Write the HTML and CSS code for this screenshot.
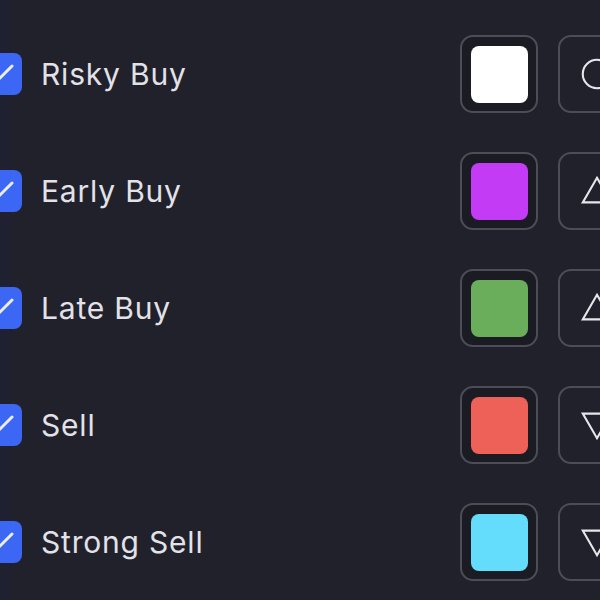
FILE: index.html
```html
<!DOCTYPE html>
<html lang="en">

<head>
    <meta charset="UTF-8">
    <meta name="viewport" content="width=device-width, initial-scale=1.0">
    <title>Signal Styles</title>
    <link rel="stylesheet" href="styles.css">
</head>

<body>
    <div class="panel">
        <ul class="series-list">
            <li class="series-row">
                <span class="checkbox">
                    <svg viewBox="0 0 42 42"><path d="M11 22 L17 28 L32 13" /></svg>
                </span>
                <span class="series-name">Risky Buy</span>
                <button class="swatch-btn"><span class="swatch" style="background-color: #ffffff;"></span></button>
                <button class="shape-btn">
                    <svg viewBox="0 0 78 78"><circle cx="39" cy="39" r="15" /></svg>
                </button>
            </li>
            <li class="series-row">
                <span class="checkbox">
                    <svg viewBox="0 0 42 42"><path d="M11 22 L17 28 L32 13" /></svg>
                </span>
                <span class="series-name">Early Buy</span>
                <button class="swatch-btn"><span class="swatch" style="background-color: #c43bf6;"></span></button>
                <button class="shape-btn">
                    <svg viewBox="0 0 78 78"><path d="M39 25 L54 51 L24 51 Z" /></svg>
                </button>
            </li>
            <li class="series-row">
                <span class="checkbox">
                    <svg viewBox="0 0 42 42"><path d="M11 22 L17 28 L32 13" /></svg>
                </span>
                <span class="series-name">Late Buy</span>
                <button class="swatch-btn"><span class="swatch" style="background-color: #6aae5c;"></span></button>
                <button class="shape-btn">
                    <svg viewBox="0 0 78 78"><path d="M39 25 L54 51 L24 51 Z" /></svg>
                </button>
            </li>
            <li class="series-row">
                <span class="checkbox">
                    <svg viewBox="0 0 42 42"><path d="M11 22 L17 28 L32 13" /></svg>
                </span>
                <span class="series-name">Sell</span>
                <button class="swatch-btn"><span class="swatch" style="background-color: #ee6159;"></span></button>
                <button class="shape-btn">
                    <svg viewBox="0 0 78 78"><path d="M24 27 L54 27 L39 53 Z" /></svg>
                </button>
            </li>
            <li class="series-row">
                <span class="checkbox">
                    <svg viewBox="0 0 42 42"><path d="M11 22 L17 28 L32 13" /></svg>
                </span>
                <span class="series-name">Strong Sell</span>
                <button class="swatch-btn"><span class="swatch" style="background-color: #64dcfb;"></span></button>
                <button class="shape-btn">
                    <svg viewBox="0 0 78 78"><path d="M24 27 L54 27 L39 53 Z" /></svg>
                </button>
            </li>
        </ul>
    </div>
</body>

</html>
```

FILE: styles.css
```css
* {
    margin: 0;
    padding: 0;
    box-sizing: border-box;
    font-family: Inter, "Noto Sans", sans-serif;
}

html,
body {
    width: 600px;
    height: 600px;
    overflow: hidden;
    background-color: #21212b;
}

.panel {
    height: 600px;
    padding-top: 35px;
    background: linear-gradient(to right, #1f2130 12px, #21212b 12px);
}

.series-list {
    list-style: none;
    width: 656px;
    margin-left: -20px;
}

.series-row {
    display: flex;
    align-items: center;
    height: 78px;
    margin-bottom: 39px;
}

.checkbox {
    display: flex;
    width: 42px;
    height: 42px;
    border-radius: 8px;
    background-color: #3c67f4;
    flex-shrink: 0;
}

.checkbox svg {
    width: 42px;
    height: 42px;
    fill: none;
    stroke: #e8ecfb;
    stroke-width: 3;
    stroke-linecap: round;
    stroke-linejoin: round;
}

.series-name {
    flex: 1;
    margin-left: 19px;
    color: #e2e2e8;
    font-size: 30px;
    letter-spacing: 0.8px;
}

.swatch-btn,
.shape-btn {
    display: flex;
    align-items: center;
    justify-content: center;
    width: 78px;
    height: 78px;
    border: 2px solid #4d4d58;
    border-radius: 13px;
    background-color: #1b1b24;
    flex-shrink: 0;
}

.shape-btn {
    margin-left: 20px;
    background-color: #21212b;
}

.swatch {
    width: 57px;
    height: 57px;
    border-radius: 8px;
}

.shape-btn svg {
    width: 74px;
    height: 74px;
    fill: none;
    stroke: #e6e6ec;
    stroke-width: 2.2;
    stroke-linejoin: miter;
}
```
